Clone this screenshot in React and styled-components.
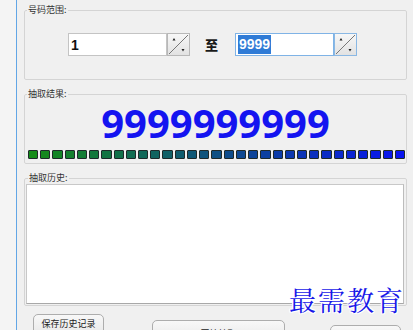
import React from "react";
import styled, { createGlobalStyle } from "styled-components";

const Global = createGlobalStyle`
  html, body { margin: 0; padding: 0; background: #f0f0f0; }
  body { font-family: "Noto Sans CJK SC", "Liberation Sans", sans-serif; }
`;

const Window = styled.div`
  position: relative;
  width: 413px;
  height: 330px;
  overflow: hidden;
  display: flex;
  background: #f0f0f0;
`;

const Edge = styled.div`
  width: 16px;
  flex: none;
  background: #f4f4f4;
  border-right: 1px solid #62a6e6;
`;

const Main = styled.div`
  flex: 1;
  display: flex;
  flex-direction: column;
  padding: 4px 6px 0 7px;
`;

const Group = styled.fieldset`
  margin: ${(p) => p.$mt || 0}px 0 0 0;
  padding: ${(p) => p.$pad};
  border: 1px solid #d4d4d4;
  border-radius: 2px;
  min-width: 0;
`;

const Legend = styled.legend`
  padding: 0 1px;
  margin-left: 2px;
  font-size: 9px;
  line-height: 12px;
  color: #333;
  font-family: "Noto Sans CJK SC", sans-serif;
`;

const RangeRow = styled.div`
  display: flex;
  align-items: center;
  margin-left: 43px;
`;

const Spin = styled.div`
  display: flex;
  height: 23px;
`;

const Field = styled.div`
  width: 95px;
  height: 21px;
  background: #fff;
  border: 1px solid ${(p) => (p.$focus ? "#7fb3e6" : "#c4c4c4")};
  display: flex;
  align-items: center;
  padding-left: 2px;
  font-family: "Liberation Sans", Arial, sans-serif;
  font-weight: bold;
  font-size: 14px;
  color: #111;
`;

const Selected = styled.span`
  background: #2f7bd6;
  color: #fff;
  line-height: 19px;
  padding: 0 1px;
`;

const SpinBtn = styled.div`
  width: 23px;
  height: 23px;
  box-sizing: border-box;
  border: 1px solid ${(p) => (p.$focus ? "#8ab8e4" : "#b8b8b8")};
  background: linear-gradient(#f7f7f7, #e2e2e2);
  display: flex;
`;

const To = styled.span`
  margin: 0 17px 0 15px;
  font-weight: 900;
  font-size: 13px;
  color: #1a1a1a;
  font-family: "Noto Sans CJK SC", sans-serif;
`;

const BigNum = styled.div`
  text-align: center;
  font-family: "Open Sans", "Liberation Sans", sans-serif;
  font-weight: 700;
  font-size: 40px;
  line-height: 40px;
  color: #1414f0;
`;

const Bar = styled.div`
  display: grid;
  grid-template-columns: repeat(31, 1fr);
  gap: 2px;
  margin: 7px 1px 0 3px;
`;

const Cell = styled.div`
  height: 9px;
  box-sizing: border-box;
  border: 1px solid #1e2a2a;
  border-radius: 1px;
  background: ${(p) => p.$c};
`;

const ListBox = styled.div`
  height: 118px;
  background: #fff;
  border: 1px solid #c8c8c8;
  border-bottom-color: #a8a8a8;
  border-right-color: #bcbcbc;
`;

const Buttons = styled.div`
  display: flex;
  align-items: flex-start;
`;

const Button = styled.div`
  flex: none;
  width: ${(p) => p.$w}px;
  height: 24px;
  margin: ${(p) => p.$mt}px 0 0 ${(p) => p.$ml}px;
  box-sizing: border-box;
  border: 1px solid #adadad;
  border-radius: 5px;
  background: linear-gradient(#f8f8f8, #e6e6e6);
  font-size: 9px;
  color: #222;
  text-align: center;
  line-height: 13px;
  padding-top: ${(p) => p.$pt}px;
  font-family: "Noto Sans CJK SC", sans-serif;
`;

const Mark = styled.div`
  position: absolute;
  right: 8px;
  top: 280px;
  font-family: "Noto Serif CJK SC", "Noto Sans CJK SC", serif;
  font-size: 27px;
  letter-spacing: 2px;
  color: #1818e8;
  text-shadow: 1px 0 #fff, -1px 0 #fff, 0 1px #fff, 0 -1px #fff, 1px 1px #fff, -1px -1px #fff, 1px -1px #fff, -1px 1px #fff;
`;

function SpinIcon() {
  return (
    <svg width="21" height="21" viewBox="0 0 21 21">
      <line x1="1" y1="20" x2="20" y2="1" stroke="#777" strokeWidth="1" />
      <path d="M6 4 L4.5 6.5 L7.5 6.5 Z" fill="#222" />
      <path d="M15 17.5 L13.5 15 L16.5 15 Z" fill="#222" />
    </svg>
  );
}

function NumInput({ children, focus }) {
  return (
    <Spin>
      <Field $focus={focus}>{children}</Field>
      <SpinBtn $focus={focus}>
        <SpinIcon />
      </SpinBtn>
    </Spin>
  );
}

const cells = Array.from({ length: 31 }, (_, i) => {
  const t = i / 30;
  const r = Math.round(20 + (8 - 20) * t);
  const g = Math.round(140 + (20 - 140) * t);
  const b = Math.round(24 + (240 - 24) * t);
  return `rgb(${r},${g},${b})`;
});

export default function App() {
  return (
    <>
      <Global />
      <Window>
        <Edge />
        <Main>
          <Group $pad="17px 0 23px 0">
            <Legend>号码范围:</Legend>
            <RangeRow>
              <NumInput>1</NumInput>
              <To>至</To>
              <NumInput focus>
                <Selected>9999</Selected>
              </NumInput>
            </RangeRow>
          </Group>
          <Group $mt={8} $pad="3px 0 4px 0">
            <Legend>抽取结果:</Legend>
            <BigNum>9999999999</BigNum>
            <Bar>
              {cells.map((c, i) => (
                <Cell key={i} $c={c} />
              ))}
            </Bar>
          </Group>
          <Group $mt={8} $pad="0 2px 1px 1px">
            <Legend>抽取历史:</Legend>
            <ListBox />
          </Group>
          <Buttons>
            <Button $w={71} $mt={8} $ml={9} $pt={2}>保存历史记录</Button>
            <Button $w={133} $mt={14} $ml={48} $pt={6}>开始抽取</Button>
            <Button $w={71} $mt={19} $ml={45} $pt={6}>退出</Button>
          </Buttons>
        </Main>
        <Mark>最需教育</Mark>
      </Window>
    </>
  );
}
